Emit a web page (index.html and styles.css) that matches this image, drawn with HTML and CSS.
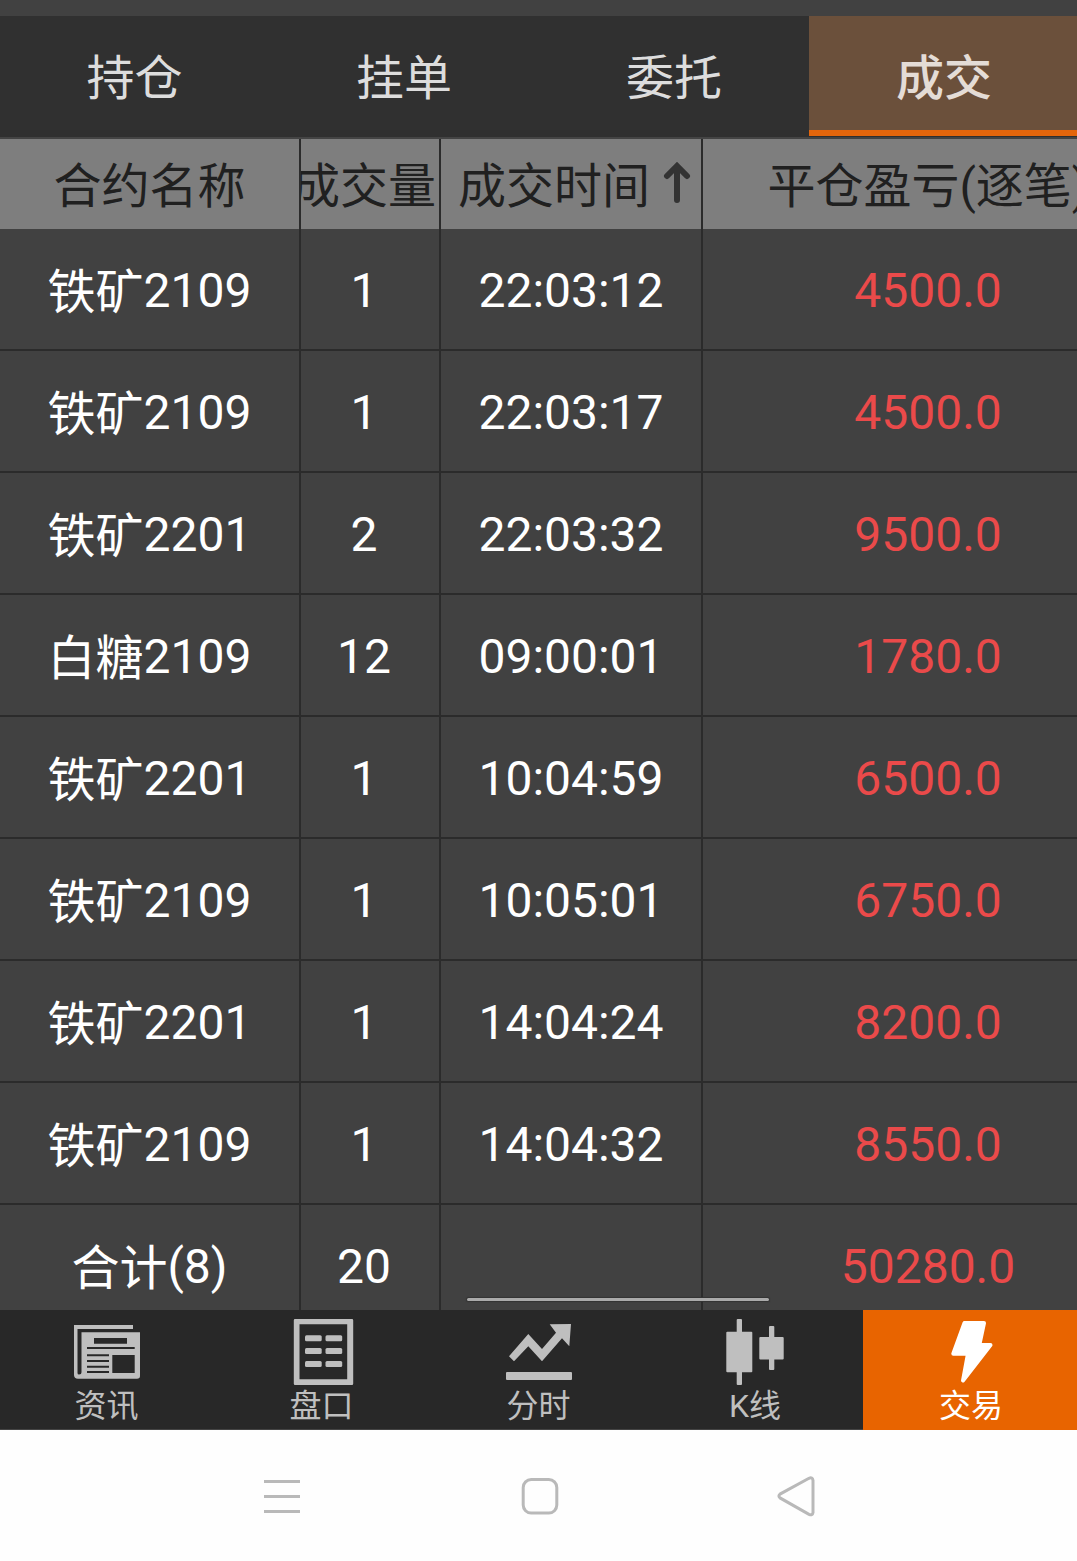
FILE: index.html
```
<!DOCTYPE html>
<html lang="zh-CN">
  <head>
    <meta charset="UTF-8" />
    <meta name="viewport" content="width=device-width, initial-scale=1.0" />
    <title>成交</title>
    <link rel="stylesheet" href="styles.css">
  </head>
  <body>
    <div class="tabs">
      <div class="tab">持仓</div>
      <div class="tab">挂单</div>
      <div class="tab">委托</div>
      <div class="tab active">成交</div>
    </div>

    <div class="tableContainer">
      <div class="row head">
        <div class="cell">合约名称</div>
        <div class="cell volume">成交量</div>
        <div class="cell time">
          <span>成交时间</span>
          <svg class="sortIcon" viewBox="0 0 28 44">
            <path d="M14 38V5M4 14L14 4L24 14" />
          </svg>
        </div>
        <div class="cell profit">平仓盈亏(逐笔)</div>
      </div>
      <div class="row">
        <div class="cell"><span class="name">铁矿</span>2109</div>
        <div class="cell volume">1</div>
        <div class="cell">22:03:12</div>
        <div class="cell profit">4500.0</div>
      </div>
      <div class="row">
        <div class="cell"><span class="name">铁矿</span>2109</div>
        <div class="cell volume">1</div>
        <div class="cell">22:03:17</div>
        <div class="cell profit">4500.0</div>
      </div>
      <div class="row">
        <div class="cell"><span class="name">铁矿</span>2201</div>
        <div class="cell volume">2</div>
        <div class="cell">22:03:32</div>
        <div class="cell profit">9500.0</div>
      </div>
      <div class="row">
        <div class="cell"><span class="name">白糖</span>2109</div>
        <div class="cell volume">12</div>
        <div class="cell">09:00:01</div>
        <div class="cell profit">1780.0</div>
      </div>
      <div class="row">
        <div class="cell"><span class="name">铁矿</span>2201</div>
        <div class="cell volume">1</div>
        <div class="cell">10:04:59</div>
        <div class="cell profit">6500.0</div>
      </div>
      <div class="row">
        <div class="cell"><span class="name">铁矿</span>2109</div>
        <div class="cell volume">1</div>
        <div class="cell">10:05:01</div>
        <div class="cell profit">6750.0</div>
      </div>
      <div class="row">
        <div class="cell"><span class="name">铁矿</span>2201</div>
        <div class="cell volume">1</div>
        <div class="cell">14:04:24</div>
        <div class="cell profit">8200.0</div>
      </div>
      <div class="row">
        <div class="cell"><span class="name">铁矿</span>2109</div>
        <div class="cell volume">1</div>
        <div class="cell">14:04:32</div>
        <div class="cell profit">8550.0</div>
      </div>
      <div class="row">
        <div class="cell"><span class="name">合计</span>(8)</div>
        <div class="cell volume">20</div>
        <div class="cell"></div>
        <div class="cell profit">50280.0</div>
      </div>
      <div class="scrollbar"></div>
    </div>

    <div class="bottomNav">
      <div class="navItem">
        <svg class="navIcon" viewBox="0 0 66 66">
          <path fill-rule="evenodd" d="M0 6H59V10H3.5V54Q3.5 55.5 5 55.5Q7.5 55.5 7.5 53V13.3H66V57Q66 59.7 63 59.7H4Q0 59.7 0 56ZM20 19V24.7H53V19ZM13 28V30H60.7V28ZM13 35.3V37.3H35V35.3ZM13 41V43H35V41ZM13 46.7V48.7H35V46.7ZM13 52V54H35V52ZM38.3 36V54H60.7V36Z" />
        </svg>
        <span>资讯</span>
      </div>
      <div class="navItem">
        <svg class="navIcon" viewBox="-1.5 0 66 66">
          <path fill-rule="evenodd" d="M4.5 0H61.5Q62.7 0 62.7 1.2V64.8Q62.7 66 61.5 66H4.5Q3.3 66 3.3 64.8V1.2Q3.3 0 4.5 0ZM9 5.3V60.3H56.7V5.3Z" />
          <rect x="14.5" y="16.3" width="16.7" height="6" rx="1.5" />
          <rect x="35" y="16.3" width="16.7" height="6" rx="1.5" />
          <rect x="14.5" y="29" width="16.7" height="6" rx="1.5" />
          <rect x="35" y="29" width="16.7" height="6" rx="1.5" />
          <rect x="14.5" y="42" width="16.7" height="6" rx="1.5" />
          <rect x="35" y="42" width="16.7" height="6" rx="1.5" />
        </svg>
        <span>盘口</span>
      </div>
      <div class="navItem">
        <svg class="navIcon" viewBox="0 0 66 66">
          <path d="M3 37.3L22.3 15L36 30L50 13.7L43.7 5.3L65 5L63.3 27.3L56 19.3L36 42.3L22.3 27.3L8 42.3Z" />
          <rect x="0" y="53" width="66" height="8" rx="1" />
        </svg>
        <span>分时</span>
      </div>
      <div class="navItem">
        <svg class="navIcon" viewBox="0 0 66 66">
          <rect x="14.7" y="0" width="5.3" height="66" rx="1" />
          <rect x="4.3" y="12.7" width="26" height="40.6" rx="1" />
          <rect x="47" y="7" width="5.3" height="44" rx="1" />
          <rect x="37.3" y="18" width="24.4" height="22.5" rx="1" />
        </svg>
        <span>K线</span>
      </div>
      <div class="navItem active">
        <svg class="navIcon" viewBox="0 0 66 66">
          <path class="bolt" d="M26.5 4H46L41.3 26H52.5L25 61.5L30 34.7H15.3Z" />
        </svg>
        <span>交易</span>
      </div>
    </div>

    <div class="systemNav">
      <svg class="systemIcon" viewBox="0 0 42 42">
        <path d="M4 5.5H40M4 20.5H40M4 35.5H40" />
      </svg>
      <svg class="systemIcon" viewBox="0 0 42 42">
        <rect x="5.2" y="3.5" width="33.6" height="33.6" rx="8" />
      </svg>
      <svg class="systemIcon" viewBox="0 0 42 42">
        <path d="M33 2.3L4 18.1Q1.8 20 4 21.9L33 38.3Q36.5 40 37 36.5V4.5Q36.5 0.7 33 2.3Z" />
      </svg>
    </div>
  </body>
</html>
```
FILE: styles.css
```
* {
  box-sizing: border-box;
}

body {
  margin: 0;
  padding-top: 16px;
  height: 1561px;
  overflow: hidden;
  background-color: #414141;
  color: #fff;
  font-family: Roboto, "Noto Sans CJK SC", sans-serif;
  font-size: 48px;
}

.tabs {
  display: grid;
  grid-template-columns: 269px 270px 270px 270px;
  height: 123px;
  background-color: #303030;
  border-bottom: 2px solid #444;
}

.tab {
  color: #ddd;
  line-height: 126px;
  text-align: center;
}

.tab.active {
  height: 120px;
  background-color: #6b503b;
  border-bottom: 6px solid #e4660c;
  color: #e4dcd6;
  font-weight: 500;
}

.tableContainer {
  position: relative;
  height: 1171px;
  overflow: hidden;
}

.row {
  display: grid;
  grid-template-columns: 301px 140px 262px 452px;
  height: 122px;
  border-bottom: 2px solid #2b2b2b;
}

.cell {
  overflow: hidden;
  border-right: 2px solid #2b2b2b;
  line-height: 123px;
  text-align: center;
  white-space: nowrap;
}

.name {
  line-height: 1;
  vertical-align: -2px;
}

.volume {
  display: flex;
  justify-content: center;
  padding-right: 12px;
}

.profit {
  color: #ea4a4a;
}

.head {
  height: 90px;
  border-bottom: none;
  background-color: #7e7e7e;
}

.head .cell {
  color: #202020;
  line-height: 96px;
}

.head .time {
  display: flex;
  padding-left: 17px;
}

.sortIcon {
  width: 28px;
  height: 44px;
  margin: 23px 0 0 13px;
  fill: none;
  stroke: #333;
  stroke-width: 6;
  stroke-linecap: round;
}

.scrollbar {
  position: absolute;
  left: 467px;
  bottom: 9px;
  width: 302px;
  height: 3px;
  border-radius: 2px;
  background-color: #aaa;
  box-shadow: 0 0 1px 1px #333;
}

.bottomNav {
  display: grid;
  grid-template-columns: 213px 217px 217px 216px 216px;
  height: 120px;
  background-color: #282828;
}

.navItem {
  display: flex;
  flex-direction: column;
  align-items: center;
  padding-top: 9px;
  border-bottom: 1px solid #444;
  color: #bfbfbf;
  font-size: 32px;
  line-height: 42px;
}

.navItem.active {
  background-color: #e86400;
  border-bottom: none;
  color: #fff;
}

.navIcon {
  width: 66px;
  height: 66px;
  fill: currentColor;
}

.bolt {
  stroke: currentColor;
  stroke-width: 4;
  stroke-linejoin: round;
}

.systemNav {
  display: flex;
  justify-content: center;
  gap: 216px;
  height: 131px;
  padding-top: 46px;
  background-color: #fefefe;
}

.systemIcon {
  width: 42px;
  height: 42px;
  fill: none;
  stroke: #b9b9b9;
  stroke-width: 3;
}
```
